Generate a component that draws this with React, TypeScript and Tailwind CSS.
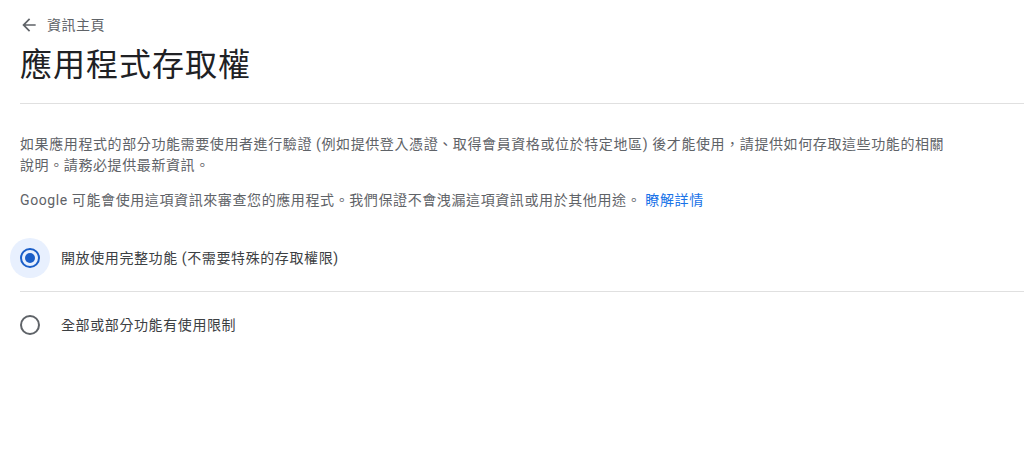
import React, { useState } from "react";

const font = "font-['Roboto','Microsoft_JhengHei','Noto_Sans_CJK_TC',sans-serif]";

const options = [
  { id: "full", label: "開放使用完整功能 (不需要特殊的存取權限)" },
  { id: "limited", label: "全部或部分功能有使用限制" },
];

const Radio: React.FC<{ checked: boolean }> = ({ checked }) => (
  <span
    className={`flex h-10 w-10 items-center justify-center rounded-full ${
      checked ? "bg-[#e8f0fe]" : ""
    }`}
  >
    <span
      className={`flex h-5 w-5 items-center justify-center rounded-full border-2 ${
        checked ? "border-[#1a5ec8]" : "border-[#5f6368]"
      }`}
    >
      {checked && <span className="h-2.5 w-2.5 rounded-full bg-[#1a5ec8]" />}
    </span>
  </span>
);

const App: React.FC = () => {
  const [selected, setSelected] = useState("full");

  return (
    <div className={`min-h-screen bg-white pl-5 ${font}`}>
      <div className="mt-[15px] flex h-5 items-center gap-2 text-sm tracking-[0.5px] text-[#5f6368]">
        <svg width="20" height="20" viewBox="0 0 24 24" fill="#5f6368" className="-ml-px">
          <path d="M20 11H7.83l5.59-5.59L12 4l-8 8 8 8 1.41-1.41L7.83 13H20v-2z" />
        </svg>
        <span>資訊主頁</span>
      </div>

      <h1 className="mt-[10px] h-10 text-[32px] leading-10 tracking-[1px] text-[#202124]">
        應用程式存取權
      </h1>

      <div className="mt-[18px] h-px bg-[#e0e0e0]" />

      <div className="pr-5 pt-[30px] text-sm tracking-[0.6px] text-[#5f6368]">
        <p className="max-w-[930px] leading-[21px]">
          如果應用程式的部分功能需要使用者進行驗證 (例如提供登入憑證、取得會員資格或位於特定地區) 後才能使用，請提供如何存取這些功能的相關說明。請務必提供最新資訊。
        </p>
        <p className="mt-[14px] leading-[21px]">
          Google 可能會使用這項資訊來審查您的應用程式。我們保證不會洩漏這項資訊或用於其他用途。{" "}
          <a className="text-[#1a73e8]">瞭解詳情</a>
        </p>
      </div>

      <div className="mt-[14px]">
        {options.map((o, i) => (
          <div key={o.id}>
            {i > 0 && <div className="h-px bg-[#e0e0e0]" />}
            <label
              className="-ml-2.5 flex h-[66px] cursor-pointer items-center gap-[11px]"
              onClick={() => setSelected(o.id)}
            >
              <Radio checked={selected === o.id} />
              <span className="text-sm tracking-[0.6px] text-[#3c4043]">{o.label}</span>
            </label>
          </div>
        ))}
      </div>
    </div>
  );
};

export default App;
